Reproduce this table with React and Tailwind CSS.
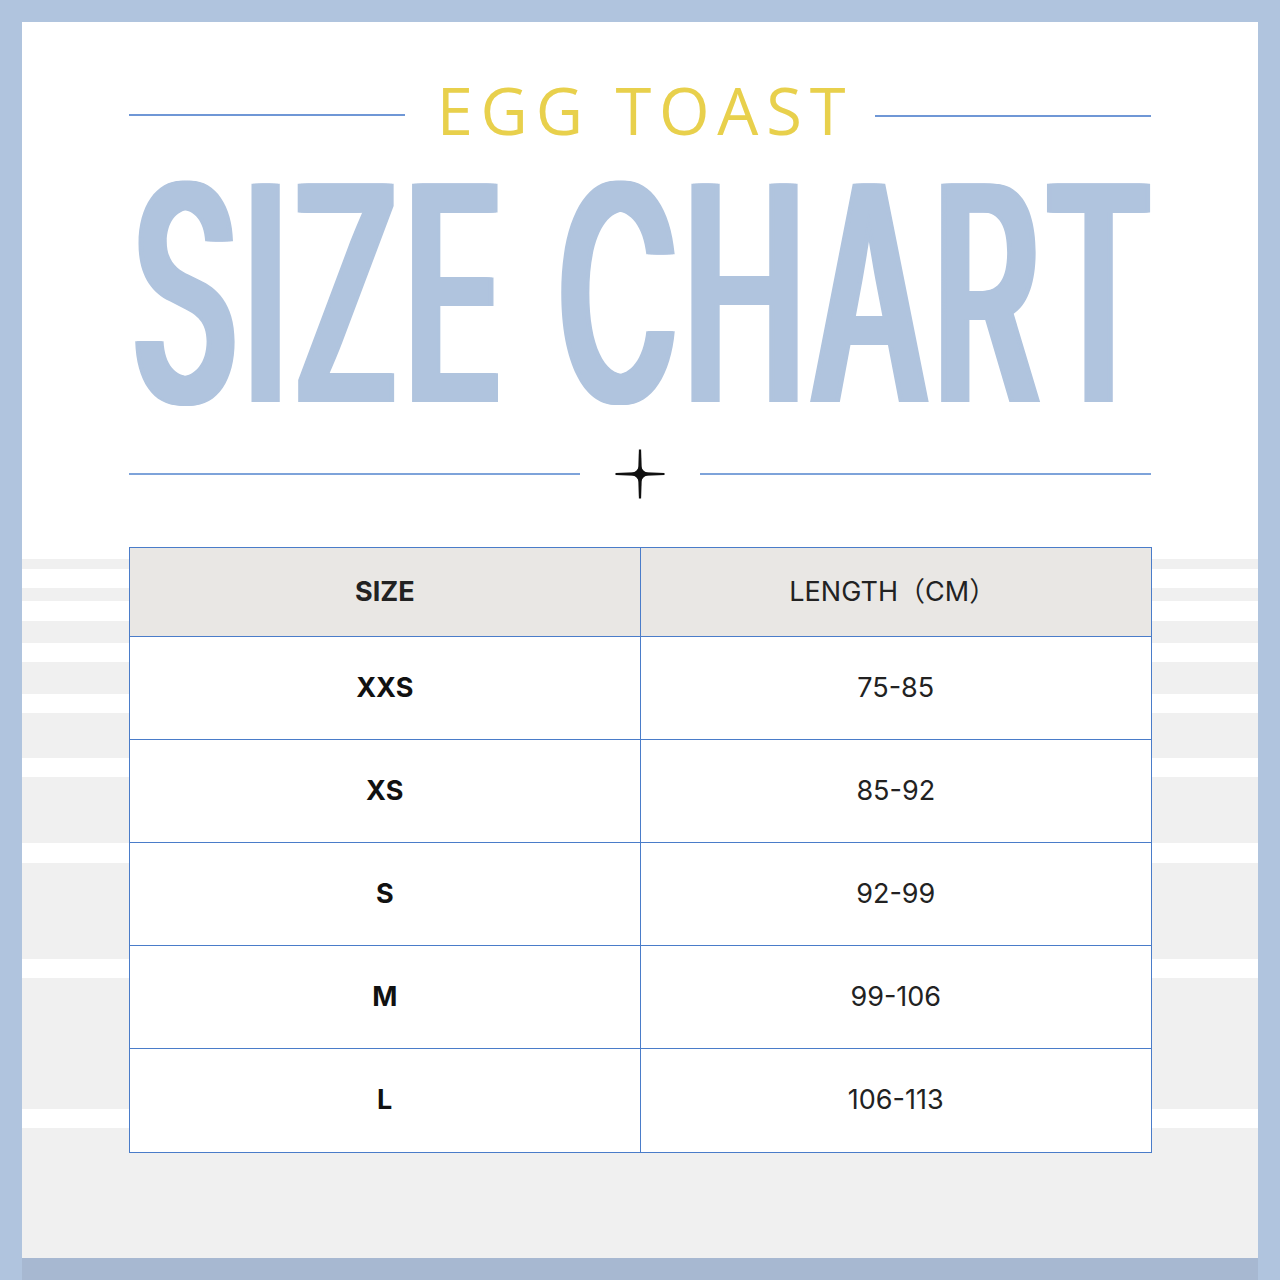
import React from "react";

const stripes = [
  { c: "w", h: 537 },
  { c: "g", h: 10 },
  { c: "w", h: 19 },
  { c: "g", h: 13 },
  { c: "w", h: 20 },
  { c: "g", h: 22 },
  { c: "w", h: 19 },
  { c: "g", h: 32 },
  { c: "w", h: 19 },
  { c: "g", h: 45 },
  { c: "w", h: 19 },
  { c: "g", h: 66 },
  { c: "w", h: 20 },
  { c: "g", h: 96 },
  { c: "w", h: 19 },
  { c: "g", h: 131 },
  { c: "w", h: 19 },
  { c: "g", h: 130 },
];

const rows = [
  ["XXS", "75-85"],
  ["XS", "85-92"],
  ["S", "92-99"],
  ["M", "99-106"],
  ["L", "106-113"],
];

function Star() {
  return (
    <svg width="52" height="52" viewBox="-26 -26 52 52">
      <path d="M-1.1,-24.5 L1.1,-24.5 L1.9,0 L1.1,24.5 L-1.1,24.5 L-1.9,0 Z" fill="#111" />
      <path d="M-24.5,-1.1 L-24.5,1.1 L0,1.9 L24.5,1.1 L24.5,-1.1 L0,-1.9 Z" fill="#111" />
      <path
        d="M0,-13 C1,-4 4,-1 13,0 C4,1 1,4 0,13 C-1,4 -4,1 -13,0 C-4,-1 -1,-4 0,-13 Z"
        fill="#111"
      />
    </svg>
  );
}

export default function App() {
  return (
    <div className="w-[1280px] h-[1280px] bg-[#b0c4de] flex flex-col px-[22px] pt-[22px]">
      <div className="relative h-[1236px] w-[1236px] bg-white overflow-hidden">
        <div className="absolute inset-0 flex flex-col">
          {stripes.map((s, i) => (
            <div
              key={i}
              className={s.c === "g" ? "bg-[#f0f0f0] shrink-0" : "bg-white shrink-0"}
              style={{ height: s.h }}
            />
          ))}
        </div>
        <div className="relative flex flex-col px-[107px] pt-[55px]">
          <div className="flex items-start h-[66px]">
            <div className="flex-1 h-[2px] bg-[#6f97d6] mt-[37px]" />
            <div
              className="ml-[32px] mr-[22px] text-[65px] leading-[66px] font-medium tracking-[0.12em] text-[#e8d04c] whitespace-nowrap"
              style={{ fontFamily: "'Open Sans', 'Noto Sans', sans-serif" }}
            >
              EGG TOAST
            </div>
            <div className="flex-1 h-[2px] bg-[#6f97d6] mt-[38px]" />
          </div>
          <div className="flex justify-center h-[300px] pl-[8px]">
            <div
              className="text-[300px] leading-none font-medium text-[#b0c4de] whitespace-nowrap scale-x-[0.55] origin-center tracking-[0.03em] [text-shadow:3px_0_0_#b0c4de,-3px_0_0_#b0c4de,6px_0_0_#b0c4de,-6px_0_0_#b0c4de,9px_0_0_#b0c4de,-9px_0_0_#b0c4de]"
              style={{ fontFamily: "Inter, 'Noto Sans', sans-serif" }}
            >
              SIZE CHART
            </div>
          </div>
          <div className="flex items-center h-[52px] mt-[5px]">
            <div className="flex-1 h-[2px] bg-[#7ea3da]" />
            <div className="mx-[34px]">
              <Star />
            </div>
            <div className="flex-1 h-[2px] bg-[#7ea3da]" />
          </div>
          <div
            className="mt-[47px] -mr-[1px] border border-[#4a7cc9] bg-white"
            style={{ fontFamily: "Inter, 'Noto Sans CJK SC', sans-serif" }}
          >
            <div className="grid grid-cols-2 h-[89px] bg-[#e9e7e4] border-b border-[#4a7cc9]">
              <div className="flex items-center justify-center border-r border-[#4a7cc9] text-[27px] font-bold text-[#222]">
                SIZE
              </div>
              <div className="flex items-center justify-center text-[27px] text-[#222] pr-[6px]">
                LENGTH（CM）
              </div>
            </div>
            {rows.map((r, i) => (
              <div
                key={i}
                className={
                  "grid grid-cols-2 h-[103px] " +
                  (i < rows.length - 1 ? "border-b border-[#4a7cc9]" : "")
                }
              >
                <div className="flex items-center justify-center border-r border-[#4a7cc9] text-[27px] font-bold text-[#111]">
                  {r[0]}
                </div>
                <div className="flex items-center justify-center text-[27px] text-[#222]">
                  {r[1]}
                </div>
              </div>
            ))}
          </div>
        </div>
      </div>
      <div className="h-[22px] w-[1236px] bg-[#a7b8d1]" />
    </div>
  );
}
